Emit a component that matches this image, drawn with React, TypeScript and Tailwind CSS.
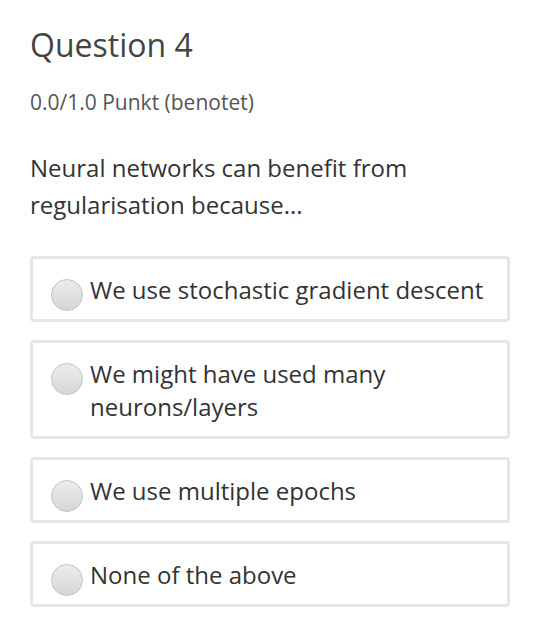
const options = [
  'We use stochastic gradient descent',
  'We might have used many neurons/layers',
  'We use multiple epochs',
  'None of the above',
];

function Radio() {
  return (
    <span className="mt-[6px] mb-[-5px] h-[32px] w-[32px] shrink-0 rounded-full border border-[#c4c4c4] bg-gradient-to-b from-[#ececec] to-[#d6d6d6]" />
  );
}

export default function App() {
  return (
    <div
      className="min-h-screen bg-white px-[30px] pt-[25px] text-[#333]"
      style={{ fontFamily: '"Open Sans", "Noto Sans", sans-serif' }}
    >
      <h1 className="text-[32px] leading-[40px] text-[#444]">Question 4</h1>
      <p className="mt-[25px] text-[21px] leading-[24px] text-[#555]">0.0/1.0 Punkt (benotet)</p>
      <p className="mt-[35px] text-[24px] leading-[37px]">
        Neural networks can benefit from
        <br />
        regularisation because...
      </p>

      <div className="mt-[33px] flex flex-col gap-[18px]">
        {options.map((label) => (
          <label
            key={label}
            className="flex items-start gap-[7px] rounded-[4px] border-[3px] border-[#e6e6e6] pt-[14px] pb-[13px] pl-[18px] pr-[16px]"
          >
            <Radio />
            <span className="text-[24px] leading-[33px] text-[#333]">
              {label === 'We might have used many neurons/layers' ? (
                <>
                  We might have used many
                  <br />
                  neurons/layers
                </>
              ) : (
                label
              )}
            </span>
          </label>
        ))}
      </div>
    </div>
  );
}
